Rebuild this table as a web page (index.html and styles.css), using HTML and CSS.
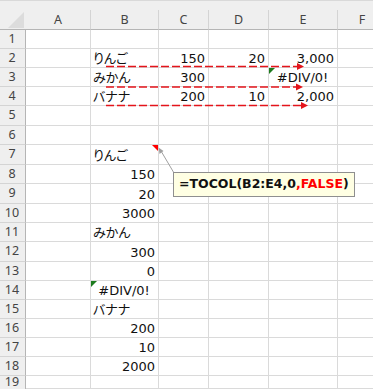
FILE: index.html
```html
<!DOCTYPE html>
<html lang="ja">
<head>
<meta charset="utf-8">
<link rel="stylesheet" href="styles.css">
</head>
<body>
<div class="app">
  <div class="band"></div>
  <div class="sheet">
    <div class="corner"><svg width="26" height="20" viewBox="0 0 26 20"><polygon points="8,18 24,18 24,2" fill="#dcdcdc"/></svg></div>
    <div class="ch">A</div><div class="ch">B</div><div class="ch">C</div><div class="ch">D</div><div class="ch">E</div><div class="ch">F</div>

    <div class="rh">1</div><div class="c"></div><div class="c"></div><div class="c"></div><div class="c"></div><div class="c"></div><div class="c"></div>
    <div class="rh">2</div><div class="c"></div><div class="c jp">りんご</div><div class="c num">150</div><div class="c num">20</div><div class="c num">3,000</div><div class="c"></div>
    <div class="rh">3</div><div class="c"></div><div class="c jp">みかん</div><div class="c num">300</div><div class="c num"></div><div class="c err"><span class="green"></span>#DIV/0!</div><div class="c"></div>
    <div class="rh">4</div><div class="c"></div><div class="c jp">バナナ</div><div class="c num">200</div><div class="c num">10</div><div class="c num">2,000</div><div class="c"></div>
    <div class="rh">5</div><div class="c"></div><div class="c"></div><div class="c"></div><div class="c"></div><div class="c"></div><div class="c"></div>
    <div class="rh">6</div><div class="c"></div><div class="c"></div><div class="c"></div><div class="c"></div><div class="c"></div><div class="c"></div>
    <div class="rh">7</div><div class="c"></div><div class="c jp"><span class="red"></span>りんご</div><div class="c"></div><div class="c"></div><div class="c"></div><div class="c"></div>
    <div class="rh">8</div><div class="c"></div><div class="c num">150</div><div class="c"></div><div class="c"></div><div class="c"></div><div class="c"></div>
    <div class="rh">9</div><div class="c"></div><div class="c num">20</div><div class="c"></div><div class="c"></div><div class="c"></div><div class="c"></div>
    <div class="rh">10</div><div class="c"></div><div class="c num">3000</div><div class="c"></div><div class="c"></div><div class="c"></div><div class="c"></div>
    <div class="rh">11</div><div class="c"></div><div class="c jp">みかん</div><div class="c"></div><div class="c"></div><div class="c"></div><div class="c"></div>
    <div class="rh">12</div><div class="c"></div><div class="c num">300</div><div class="c"></div><div class="c"></div><div class="c"></div><div class="c"></div>
    <div class="rh">13</div><div class="c"></div><div class="c num">0</div><div class="c"></div><div class="c"></div><div class="c"></div><div class="c"></div>
    <div class="rh">14</div><div class="c"></div><div class="c err"><span class="green"></span>#DIV/0!</div><div class="c"></div><div class="c"></div><div class="c"></div><div class="c"></div>
    <div class="rh">15</div><div class="c"></div><div class="c jp">バナナ</div><div class="c"></div><div class="c"></div><div class="c"></div><div class="c"></div>
    <div class="rh">16</div><div class="c"></div><div class="c num">200</div><div class="c"></div><div class="c"></div><div class="c"></div><div class="c"></div>
    <div class="rh">17</div><div class="c"></div><div class="c num">10</div><div class="c"></div><div class="c"></div><div class="c"></div><div class="c"></div>
    <div class="rh">18</div><div class="c"></div><div class="c num">2000</div><div class="c"></div><div class="c"></div><div class="c"></div><div class="c"></div>
    <div class="rh last">19</div><div class="c"></div><div class="c"></div><div class="c"></div><div class="c"></div><div class="c"></div><div class="c"></div>
  </div>

  <svg class="overlay" width="373" height="389" viewBox="0 0 373 389">
    <g stroke="#e4141b" stroke-width="1.5" stroke-dasharray="8 3" fill="none">
      <line x1="106" y1="66.5" x2="298" y2="66.5"/>
      <line x1="106" y1="87" x2="297" y2="87"/>
      <line x1="106" y1="105.5" x2="302" y2="105.5"/>
    </g>
    <g fill="#e4141b">
      <polygon points="297,63 304,66.5 297,70"/>
      <polygon points="296,83.5 303,87 296,90.5"/>
      <polygon points="301,102 308,105.5 301,109"/>
    </g>
    <line x1="161" y1="151" x2="174" y2="173" stroke="#a0a0a0" stroke-width="1"/>
    <polygon points="158.5,147.5 163.5,151 159.5,154" fill="#a0a0a0"/>
  </svg>

  <div class="callout">=TOCOL(B2:E4,0<span class="hl">,FALSE</span>)</div>
</div>
</body>
</html>
```

FILE: styles.css
```css
html, body {
  margin: 0;
  padding: 0;
  background: #ffffff;
}

.app {
  position: relative;
  width: 373px;
  height: 389px;
  overflow: hidden;
}

.band {
  height: 10px;
  box-sizing: border-box;
  background: #efefef;
  border-top: 1px solid #d9d9d9;
}

.sheet {
  display: grid;
  grid-template-columns: 26px 65px 68px 50px 60px 69px 49px;
  grid-template-rows: 20px 19px 19px 19px 19px 20px 19px 20px 19px 20px 19px 19px 20px 19px 19px 19px 19px 19px 19px 13px;
  width: 387px;
}

.corner {
  background: #efefef;
  border-bottom: 1px solid #b5b5b5;
  box-sizing: border-box;
  line-height: 0;
}

.ch {
  background: #efefef;
  box-sizing: border-box;
  border-right: 1px solid #d4d4d4;
  border-bottom: 1px solid #b5b5b5;
  font-family: "Noto Sans", sans-serif;
  font-size: 12.5px;
  color: #444444;
  display: flex;
  align-items: center;
  justify-content: center;
  padding-bottom: 1px;
}

.rh {
  background: #efefef;
  box-sizing: border-box;
  border-right: 1px solid #b5b5b5;
  border-bottom: 1px solid #d4d4d4;
  font-family: "Noto Sans", sans-serif;
  font-size: 12.5px;
  line-height: 13px;
  color: #444444;
  display: flex;
  align-items: center;
  justify-content: center;
  padding-bottom: 2px;
  padding-right: 1px;
}

.rh.last {
  border-bottom: none;
  padding-bottom: 0;
  align-items: flex-start;
  line-height: 12px;
}

.c {
  position: relative;
  box-sizing: border-box;
  border-right: 1px solid #dadada;
  border-bottom: 1px solid #dadada;
  font-family: "DejaVu Sans", "Noto Sans CJK JP", sans-serif;
  font-size: 13px;
  line-height: 15px;
  color: #111111;
  display: flex;
  align-items: flex-end;
  padding: 0 3px 1px 2px;
  white-space: nowrap;
}

.jp {
  font-feature-settings: "palt";
}

.num {
  justify-content: flex-end;
}

.err {
  justify-content: center;
}

.green {
  position: absolute;
  left: 0;
  top: 0;
  width: 0;
  height: 0;
  border-top: 6px solid #1d7b1d;
  border-right: 6px solid transparent;
}

.red {
  position: absolute;
  right: 0;
  top: 0;
  width: 0;
  height: 0;
  border-top: 6px solid #ff0000;
  border-left: 6px solid transparent;
}

.overlay {
  position: absolute;
  left: 0;
  top: 0;
  pointer-events: none;
}

.callout {
  position: absolute;
  left: 173px;
  top: 172px;
  width: 182px;
  height: 25px;
  box-sizing: border-box;
  border: 1px solid #8f8f8f;
  background: #ffffe3;
  padding-left: 5px;
  font-family: "DejaVu Sans", sans-serif;
  font-weight: bold;
  font-size: 12.5px;
  line-height: 22px;
  color: #111111;
  white-space: nowrap;
}

.hl {
  color: #ff0000;
}
```
